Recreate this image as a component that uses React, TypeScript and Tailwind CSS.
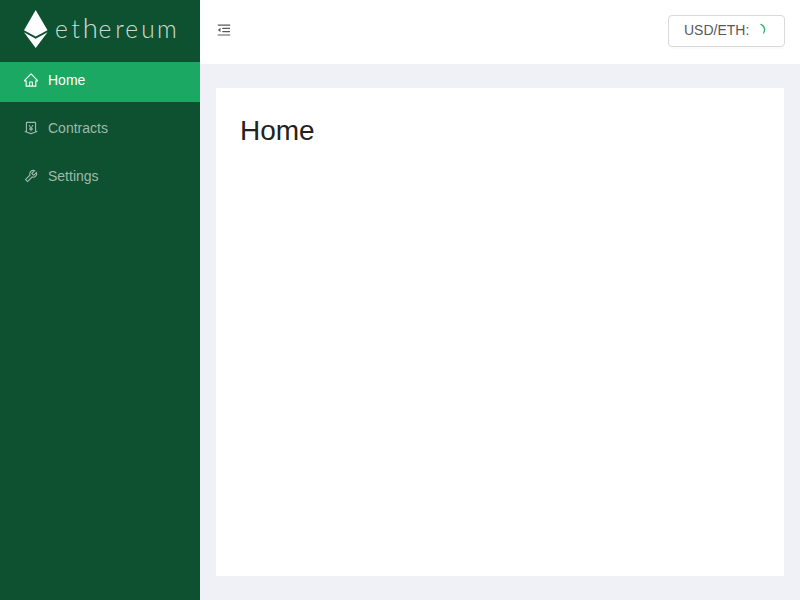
import {
  AiOutlineHome,
  AiOutlineLoading,
  AiOutlineMenuFold,
  AiOutlineMoneyCollect,
  AiOutlineTool,
} from "react-icons/ai";

// Trims the empty margin of the icon grid so glyphs fill their box.
const tight = "64 64 896 896";

const menu = [
  { label: "Home", Icon: AiOutlineHome, active: true },
  { label: "Contracts", Icon: AiOutlineMoneyCollect, active: false },
  { label: "Settings", Icon: AiOutlineTool, active: false },
];

function Logo() {
  return (
    <svg className="block" width="200" height="54" viewBox="0 0 200 54" fill="#fff">
      <path d="M35.7 10L47.5 30.2L35.7 36.4L24 30.2Z" />
      <path d="M24 32.3L35.7 38.7L47.5 32.3L35.7 48Z" />
      <g
        className="opacity-90"
        fontSize="24.5"
        fontWeight="300"
        fontFamily="Lato, sans-serif"
        fill="#e2ebe6"
      >
        <text x="55 71.4" y="37.8">
          et
          <tspan x="82.8" fontSize="27.5">
            h
          </tspan>
          <tspan x="98.6 115.2 125.3 141.2 157">ereum</tspan>
        </text>
      </g>
    </svg>
  );
}

function Sidebar() {
  return (
    <aside className="w-[200px] shrink-0 bg-[#0d5130]">
      <Logo />
      <nav className="flex flex-col gap-2 pt-2">
        {menu.map(({ label, Icon, active }) => (
          <a
            key={label}
            className={
              active
                ? "flex h-10 items-center gap-[10px] bg-[#1ba862] pb-1 pl-6 text-white"
                : "flex h-10 items-center gap-[10px] pb-1 pl-6 text-[#9fb9ac]"
            }
          >
            <Icon size={14} viewBox={tight} />
            <span>{label}</span>
          </a>
        ))}
      </nav>
    </aside>
  );
}

export default function App() {
  return (
    <div className="flex h-[600px] w-[800px] overflow-hidden font-['Liberation_Sans',Arial,sans-serif] text-sm">
      <Sidebar />
      <div className="flex grow flex-col bg-[#f0f1f6]">
        <header className="flex h-16 items-center justify-between bg-white pr-[15px] pb-1 pl-[17px] text-[#595959]">
          <AiOutlineMenuFold size={14} viewBox={tight} />
          <div className="mt-[2px] flex h-8 w-[117px] items-center rounded border border-[#d9d9d9] pb-[2px] pl-[15px] shadow-[0_2px_0_rgba(0,0,0,0.016)]">
            <span>USD/ETH:</span>
            <AiOutlineLoading
              className="ml-[2px] rotate-[28deg] text-[#1db36a]"
              size={14}
              strokeWidth={24}
            />
          </div>
        </header>
        <main className="mx-4 my-6 grow bg-white p-6">
          <h1 className="text-[28px] leading-[38px] text-[#222222]">Home</h1>
        </main>
      </div>
    </div>
  );
}
